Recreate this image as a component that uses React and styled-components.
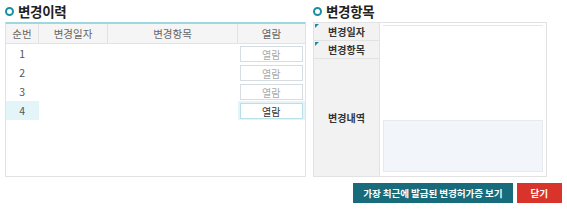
import styled, { createGlobalStyle } from 'styled-components';

const GlobalStyle = createGlobalStyle`
  body {
    margin: 0;
    background: #fff;
    font-family: "Noto Sans CJK KR", "Noto Sans", sans-serif;
    color: #333;
  }
`

const Page = styled.div`
  width: 567px;
  padding: 0 5px;
  box-sizing: border-box;
`

const Columns = styled.div`
  display: flex;
  gap: 7px;
`

const Panel = styled.section`
  width: ${p => p.$w}px;
  display: flex;
  flex-direction: column;
`

const Title = styled.h2`
  display: flex;
  align-items: center;
  gap: 4px;
  height: 22px;
  margin: 0;
  font-size: 13.5px;
  font-weight: 700;
  color: #222;
  letter-spacing: -0.3px;
`

const Ring = styled.span`
  width: 5px;
  height: 5px;
  border: 2px solid #1b8ea3;
  border-radius: 50%;
`

const Box = styled.div`
  height: 155px;
  border: 1px solid #e2e2e2;
  border-top: 2px solid #9ed8df;
  box-sizing: border-box;
`

const Grid = styled.table`
  width: 100%;
  border-collapse: collapse;
  font-size: 10.5px;
`

const Th = styled.th`
  height: 19px;
  padding: 0;
  background: #f5f5f5;
  border-right: 1px solid #e2e2e2;
  border-bottom: 1px solid #e2e2e2;
  font-weight: 400;
  color: #666;
  width: ${p => p.$w ? p.$w + 'px' : 'auto'};
  &:last-child { border-right: none; }
`

const Td = styled.td`
  height: 19px;
  padding: 0;
  text-align: center;
  color: #555;
  background: ${p => p.$on ? '#e4f5fa' : '#fff'};
`

const ViewBtn = styled.button`
  width: 63px;
  height: 16px;
  padding: 0;
  background: #fff;
  border: 1px solid ${p => p.$on ? '#b9dfe9' : '#d5dde2'};
  font-family: inherit;
  font-size: 10px;
  color: ${p => p.$on ? '#333' : '#aaa'};
  display: block;
  margin: 0 auto;
`

const FormBox = styled.div`
  height: 155px;
  border: 1px solid #e2e2e2;
  box-sizing: border-box;
  display: grid;
  grid-template-columns: 66px 1fr;
  grid-template-rows: 18px 18px 1fr;
`

const Label = styled.div`
  position: relative;
  background: #f2f2f2;
  border-right: 1px solid #e2e2e2;
  border-bottom: ${p => p.$last ? 'none' : '1px solid #e2e2e2'};
  display: flex;
  align-items: center;
  justify-content: center;
  font-size: 10px;
  font-weight: 700;
  color: #333;
  ${p => p.$mark && `
    &::before {
      content: '';
      position: absolute;
      left: 1px;
      top: 1px;
      border-top: 4px solid #1a8ea4;
      border-right: 4px solid transparent;
    }
  `}
`

const Value = styled.div`
  padding: 2px 3px 4px 3px;
  display: flex;
  flex-direction: column;
  justify-content: ${p => p.$end ? 'flex-end' : 'flex-start'};
`

const Line = styled.div`
  border-top: 1px solid #e6e6e6;
`

const TextArea = styled.div`
  height: 50px;
  background: #f2f5f9;
  border: 1px solid #e6e9ee;
`

const Actions = styled.div`
  display: flex;
  justify-content: flex-end;
  gap: 4px;
  margin-top: 6px;
`

const Btn = styled.button`
  height: 20px;
  padding: 0 ${p => p.$pad}px;
  border: none;
  background: ${p => p.$bg};
  color: #fff;
  font-family: inherit;
  font-size: 9.6px;
  font-weight: 700;
  letter-spacing: -0.1px;
  box-sizing: border-box;
`

const rows = [1, 2, 3, 4]

export default function App() {
  return (
    <Page>
      <GlobalStyle />
      <Columns>
        <Panel $w={301}>
          <Title><Ring />변경이력</Title>
          <Box>
            <Grid>
              <thead>
                <tr>
                  <Th $w={32}>순번</Th>
                  <Th $w={68}>변경일자</Th>
                  <Th>변경항목</Th>
                  <Th $w={67}>열람</Th>
                </tr>
              </thead>
              <tbody>
                {rows.map(n => (
                  <tr key={n}>
                    <Td $on={n === 4}>{n}</Td>
                    <Td />
                    <Td />
                    <Td $on={n === 4}><ViewBtn $on={n === 4}>열람</ViewBtn></Td>
                  </tr>
                ))}
              </tbody>
            </Grid>
          </Box>
        </Panel>
        <Panel $w={234}>
          <Title><Ring />변경항목</Title>
          <FormBox>
            <Label $mark>변경일자</Label>
            <Value><Line /></Value>
            <Label $mark>변경항목</Label>
            <Value />
            <Label $last>변경내역</Label>
            <Value $end><TextArea /></Value>
          </FormBox>
        </Panel>
      </Columns>
      <Actions>
        <Btn $bg="#176b7a" $pad={10}>가장 최근에 발급된 변경허가증 보기</Btn>
        <Btn $bg="#d9342b" $pad={14}>닫기</Btn>
      </Actions>
    </Page>
  )
}
